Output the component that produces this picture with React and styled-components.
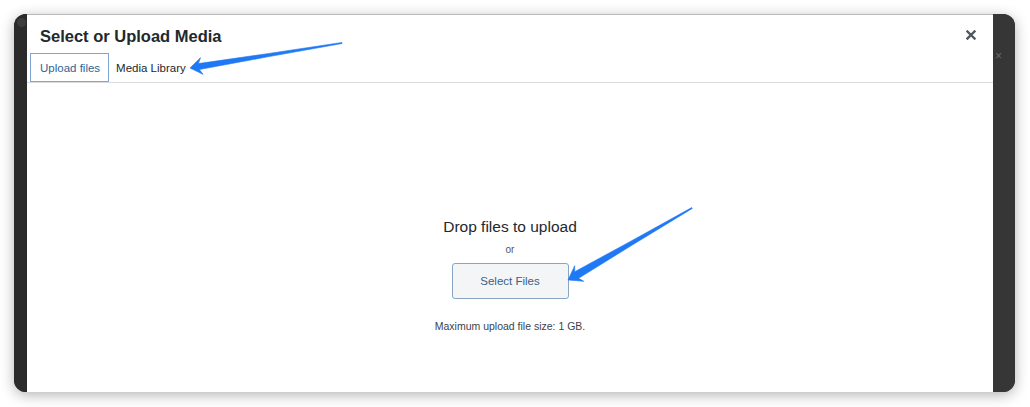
import React from 'react';
import { styled, createGlobalStyle } from 'styled-components';

const GlobalStyle = createGlobalStyle`
  body {
    margin: 0;
    background: #fff;
    font-family: "Liberation Sans", Arial, sans-serif;
  }
`;

// annotation arrows, in page coordinates
const arrows = [
  { tail: [342, 43], tip: [190, 68], head: 12, wing: 8.5, neck: 3 },
  { tail: [692, 208], tip: [568, 280], head: 13, wing: 9, neck: 3.8 }
];

function arrowPoints({ tail, tip, head, wing, neck }) {
  const dx = tail[0] - tip[0];
  const dy = tail[1] - tip[1];
  const len = Math.hypot(dx, dy);
  const u = [dx / len, dy / len];
  const n = [-u[1], u[0]];
  const at = (along, side) => [tip[0] + u[0] * along + n[0] * side, tip[1] + u[1] * along + n[1] * side];
  const pts = [
    tip,
    at(head, -wing),
    at(head - 3, -neck),
    at(len * 0.5, -neck * 0.55),
    at(len, -0.5),
    at(len, 0.5),
    at(len * 0.5, neck * 0.55),
    at(head - 3, neck),
    at(head, wing)
  ];
  return pts.map((p) => p.map((v) => v.toFixed(1)).join(',')).join(' ');
}

function App() {
  return (
    <StPage>
      <GlobalStyle />
      <StFrame>
        <StLeftRail />
        <StModal>
          <StHeader>
            <StTitle>Select or Upload Media</StTitle>
            <StClose aria-label="Close dialog">
              <svg width="10" height="10" viewBox="0 0 10 10">
                <path d="M1.5 1.5 L8.5 8.5 M8.5 1.5 L1.5 8.5" stroke="#50575e" strokeWidth="2.4" strokeLinecap="square" />
              </svg>
            </StClose>
          </StHeader>
          <StTabBar>
            <StTab $active>Upload files</StTab>
            <StTab>Media Library</StTab>
          </StTabBar>
          <StUploader>
            <StDropTitle>Drop files to upload</StDropTitle>
            <StOr>or</StOr>
            <StSelectButton>Select Files</StSelectButton>
            <StMaxSize>Maximum upload file size: 1 GB.</StMaxSize>
          </StUploader>
        </StModal>
        <StRightRail>
          <StRailGlyph>×</StRailGlyph>
        </StRightRail>
      </StFrame>
      <StOverlay width="1030" height="407" viewBox="0 0 1030 407">
        {arrows.map((a, i) => (
          <polygon key={i} points={arrowPoints(a)} fill="#1f78f4" stroke="#1f78f4" strokeWidth="0.6" strokeLinejoin="round" />
        ))}
      </StOverlay>
    </StPage>
  );
}

export default App;

const StPage = styled.div`
  position: relative;
  width: 1030px;
  height: 407px;
  box-sizing: border-box;
  padding: 14px 15px 15px 14px;
`;

const StFrame = styled.div`
  display: flex;
  height: 378px;
  background: #303030;
  border-radius: 12px;
  overflow: hidden;
  box-shadow: 0 3px 14px rgba(0, 0, 0, 0.3);
`;

const StLeftRail = styled.div`
  width: 13px;
  flex-shrink: 0;
  background: #2b2b2b;
  padding-top: 4px;

  &::before {
    content: '';
    display: block;
    width: 9px;
    height: 9px;
    margin-left: 3px;
    border-radius: 50%;
    background: #3d3d3d;
  }
`;

const StRightRail = styled.div`
  width: 22px;
  flex-shrink: 0;
  background: #363636;
`;

const StRailGlyph = styled.div`
  margin: 35px 0 0 2px;
  font-size: 12px;
  line-height: 14px;
  color: #6a6a6a;
`;

const StModal = styled.div`
  flex: 1;
  display: flex;
  flex-direction: column;
  background: #fff;
  border-top: 1px solid #b9b9b9;
`;

const StHeader = styled.div`
  display: flex;
  justify-content: space-between;
  align-items: flex-start;
  height: 38px;
  box-sizing: border-box;
  padding: 11px 17px 0 13px;
`;

const StTitle = styled.h1`
  margin: 0;
  font-size: 16.5px;
  line-height: 20px;
  font-weight: 700;
  color: #23282d;
`;

const StClose = styled.button`
  display: flex;
  margin-top: 4px;
  padding: 0;
  border: 0;
  background: none;
  cursor: pointer;
`;

const StTabBar = styled.div`
  display: flex;
  height: 30px;
  box-sizing: border-box;
  padding-left: 3px;
  border-bottom: 1px solid #dcdcde;
`;

const StTab = styled.div`
  display: flex;
  align-items: center;
  padding: ${(p) => (p.$active ? '0 8px 0 9px' : '0 6px')};
  border: 1px solid ${(p) => (p.$active ? '#7fa6d3' : 'transparent')};
  font-size: 11.5px;
  color: ${(p) => (p.$active ? '#2f6395' : '#23282d')};
  cursor: pointer;
`;

const StUploader = styled.div`
  flex: 1;
  display: flex;
  flex-direction: column;
  align-items: center;
  padding-top: 134px;
`;

const StDropTitle = styled.p`
  margin: 0;
  font-size: 15.5px;
  line-height: 20px;
  color: #23282d;
`;

const StOr = styled.p`
  margin: 6px 0 0;
  font-size: 10px;
  line-height: 14px;
  color: #50575e;
`;

const StSelectButton = styled.button`
  margin-top: 6px;
  width: 117px;
  height: 36px;
  box-sizing: border-box;
  border: 1px solid #88a5c5;
  border-radius: 3px;
  background: #f3f5f6;
  font-family: inherit;
  font-size: 11.5px;
  color: #3a5f88;
  cursor: pointer;
`;

const StMaxSize = styled.p`
  margin: 20px 0 0;
  font-size: 10.5px;
  line-height: 14px;
  color: #3c434a;
`;

const StOverlay = styled.svg`
  position: absolute;
  top: 0;
  left: 0;
  pointer-events: none;
`;
